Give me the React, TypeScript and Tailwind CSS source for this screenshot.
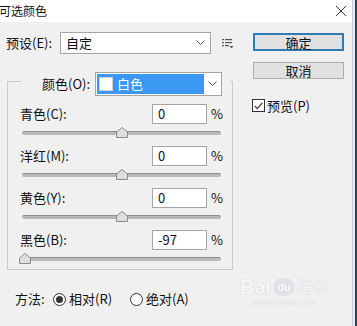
import React from 'react';

const FONT = "font-['Noto_Sans_CJK_SC','Noto_Sans',sans-serif]";

const rows = [
  { label: '青色(C):', value: 0 },
  { label: '洋红(M):', value: 0 },
  { label: '黄色(Y):', value: 0 },
  { label: '黑色(B):', value: -97 },
];

function Chevron() {
  return (
    <svg width="9" height="6" viewBox="0 0 9 6" fill="none" stroke="#555" strokeWidth="1">
      <polyline points="0.5,0.5 4.5,4.5 8.5,0.5" />
    </svg>
  );
}

function Slider({ value, last }: { value: number; last?: boolean }) {
  const pos = ((value + 100) / 200) * 199;
  return (
    <div className={`relative ml-[14px] w-[199px] pt-[7px] ${last ? 'h-[19px]' : 'h-[22px]'}`}>
      <div className="h-[4px] rounded-full bg-[#b9b9b9] border-t border-[#8f8f8f]" />
      {/* thumb */}
      <svg
        className="absolute top-[3px]"
        style={{ left: pos - 6 }}
        width="12"
        height="11"
        viewBox="0 0 12 11"
      >
        <polygon points="0.5,10.5 0.5,5 6,0.5 11.5,5 11.5,10.5" fill="#dedede" stroke="#8c8c8c" />
      </svg>
    </div>
  );
}

function Radio({ checked }: { checked?: boolean }) {
  return (
    <span className="w-[13px] h-[13px] rounded-full border border-[#333] bg-white flex items-center justify-center">
      {checked && <span className="w-[7px] h-[7px] rounded-full bg-[#333]" />}
    </span>
  );
}

export default function App() {
  return (
    <div className={`w-[357px] h-[326px] flex bg-[#f0f0f0] text-[13px] text-[#111] overflow-hidden relative ${FONT}`}>
      <div className="flex-1 flex flex-col">
        {/* Title bar */}
        <div className="h-[22px] bg-white flex items-center justify-between">
          <span className="text-[12px] -ml-[1px] leading-none">可选颜色</span>
          <svg className="mr-[6px]" width="10" height="10" viewBox="0 0 10 10" stroke="#333" strokeWidth="1">
            <line x1="0" y1="0" x2="10" y2="10" />
            <line x1="10" y1="0" x2="0" y2="10" />
          </svg>
        </div>

        <div className="flex pt-[10px]">
          {/* Left column */}
          <div className="w-[253px] flex flex-col">
            <div className="flex items-center h-[22px]">
              <span className="pl-[6px] w-[60px]">预设(E):</span>
              <div className="w-[151px] h-[22px] border border-[#a5a5a5] bg-white flex items-center justify-between pl-[5px] pr-[5px]">
                <span>自定</span>
                <Chevron />
              </div>
              <svg className="ml-[11px]" width="12" height="11" viewBox="0 0 12 11" fill="#555">
                <rect x="0" y="1" width="2" height="1.2" />
                <rect x="3" y="1" width="7" height="1.2" />
                <rect x="0" y="4" width="2" height="1.2" />
                <rect x="3" y="4" width="7" height="1.2" />
                <rect x="0" y="7" width="2" height="1.2" />
                <rect x="3" y="7" width="4" height="1.2" />
                <polygon points="7.5,8 11.5,8 9.5,10.5" />
              </svg>
            </div>

            {/* Group box */}
            <div className="mt-[27px] ml-[7px] w-[226px] border border-[#c9c9c9] flex flex-col">
              <div className="-mt-[10px] ml-[13px] w-fit bg-[#f0f0f0] flex items-center h-[24px] pl-[21px] pr-[8px]">
                <span className="mr-[5px]">颜色(O):</span>
                <div className="w-[127px] h-[24px] border border-[#a5a5a5] bg-white flex items-center p-[1px]">
                  <div className="flex-1 h-full bg-[#3a97f2] flex items-center pl-[2px]">
                    <span className="w-[14px] h-[14px] bg-white border border-[#d0d0d0]" />
                    <span className="ml-[4px] text-white">白色</span>
                  </div>
                  <div className="w-[16px] flex justify-center">
                    <Chevron />
                  </div>
                </div>
              </div>

              <div className="mt-[8px] flex flex-col">
                {rows.map((r, i) => (
                  <div key={r.label} className="flex flex-col">
                    <div className="flex items-center h-[20px]">
                      <span className="pl-[12px] w-[144px]">{r.label}</span>
                      <div className="w-[55px] h-[20px] border border-[#a5a5a5] bg-white flex items-center pl-[5px]">
                        {r.value}
                      </div>
                      <span className="ml-[4px]">%</span>
                    </div>
                    <Slider value={r.value} last={i === rows.length - 1} />
                  </div>
                ))}
              </div>
            </div>

            {/* Method */}
            <div className="mt-[19px] h-[20px] flex items-center pl-[15px]">
              <span className="w-[38px]">方法:</span>
              <Radio checked />
              <span className="ml-[3px] w-[61px]">相对(R)</span>
              <Radio />
              <span className="ml-[3px]">绝对(A)</span>
            </div>
          </div>

          {/* Right column */}
          <div className="flex flex-col">
            <button className="mt-[1px] w-[91px] h-[18px] border-2 border-[#2f7bb6] bg-[#e1e1e1] flex items-center justify-center leading-none">
              确定
            </button>
            <button className="mt-[11px] w-[91px] h-[17px] border border-[#adadad] bg-[#e1e1e1] flex items-center justify-center leading-none">
              取消
            </button>
            <div className="mt-[17px] flex items-center -ml-[1px]">
              <span className="w-[13px] h-[13px] border border-[#333] bg-white flex items-center justify-center">
                <svg width="9" height="8" viewBox="0 0 9 8" fill="none" stroke="#333" strokeWidth="1.2">
                  <polyline points="0.8,4 3.3,6.6 8.3,0.8" />
                </svg>
              </span>
              <span className="ml-[2px]">预览(P)</span>
            </div>
          </div>
        </div>
      </div>

      {/* Window edge */}
      <div className="w-[5px] flex">
        <div className="w-[1px] bg-[#c3ccd2]" />
        <div className="w-[2px] bg-[#e6eef3]" />
        <div className="w-[2px] bg-[#23404f]" />
      </div>

      {/* Watermark */}
      <div className="absolute left-[240px] top-[277px] flex flex-col items-center text-[#f6f6f8] [text-shadow:0_0_1px_#bfbfc4] font-['Liberation_Sans','Noto_Sans_CJK_SC',sans-serif]">
        <div className="flex items-center gap-[2px] text-[20px] font-bold leading-none">
          <span>Bai</span>
          <span className="w-[22px] h-[18px] rounded-full bg-[#e2e2e6] text-[11px] text-white flex items-center justify-center">du</span>
          <span className="text-[16px] font-normal">经验</span>
        </div>
        <span className="text-[8px] leading-none mt-[2px]">jingyan.baidu.com</span>
      </div>
    </div>
  );
}
